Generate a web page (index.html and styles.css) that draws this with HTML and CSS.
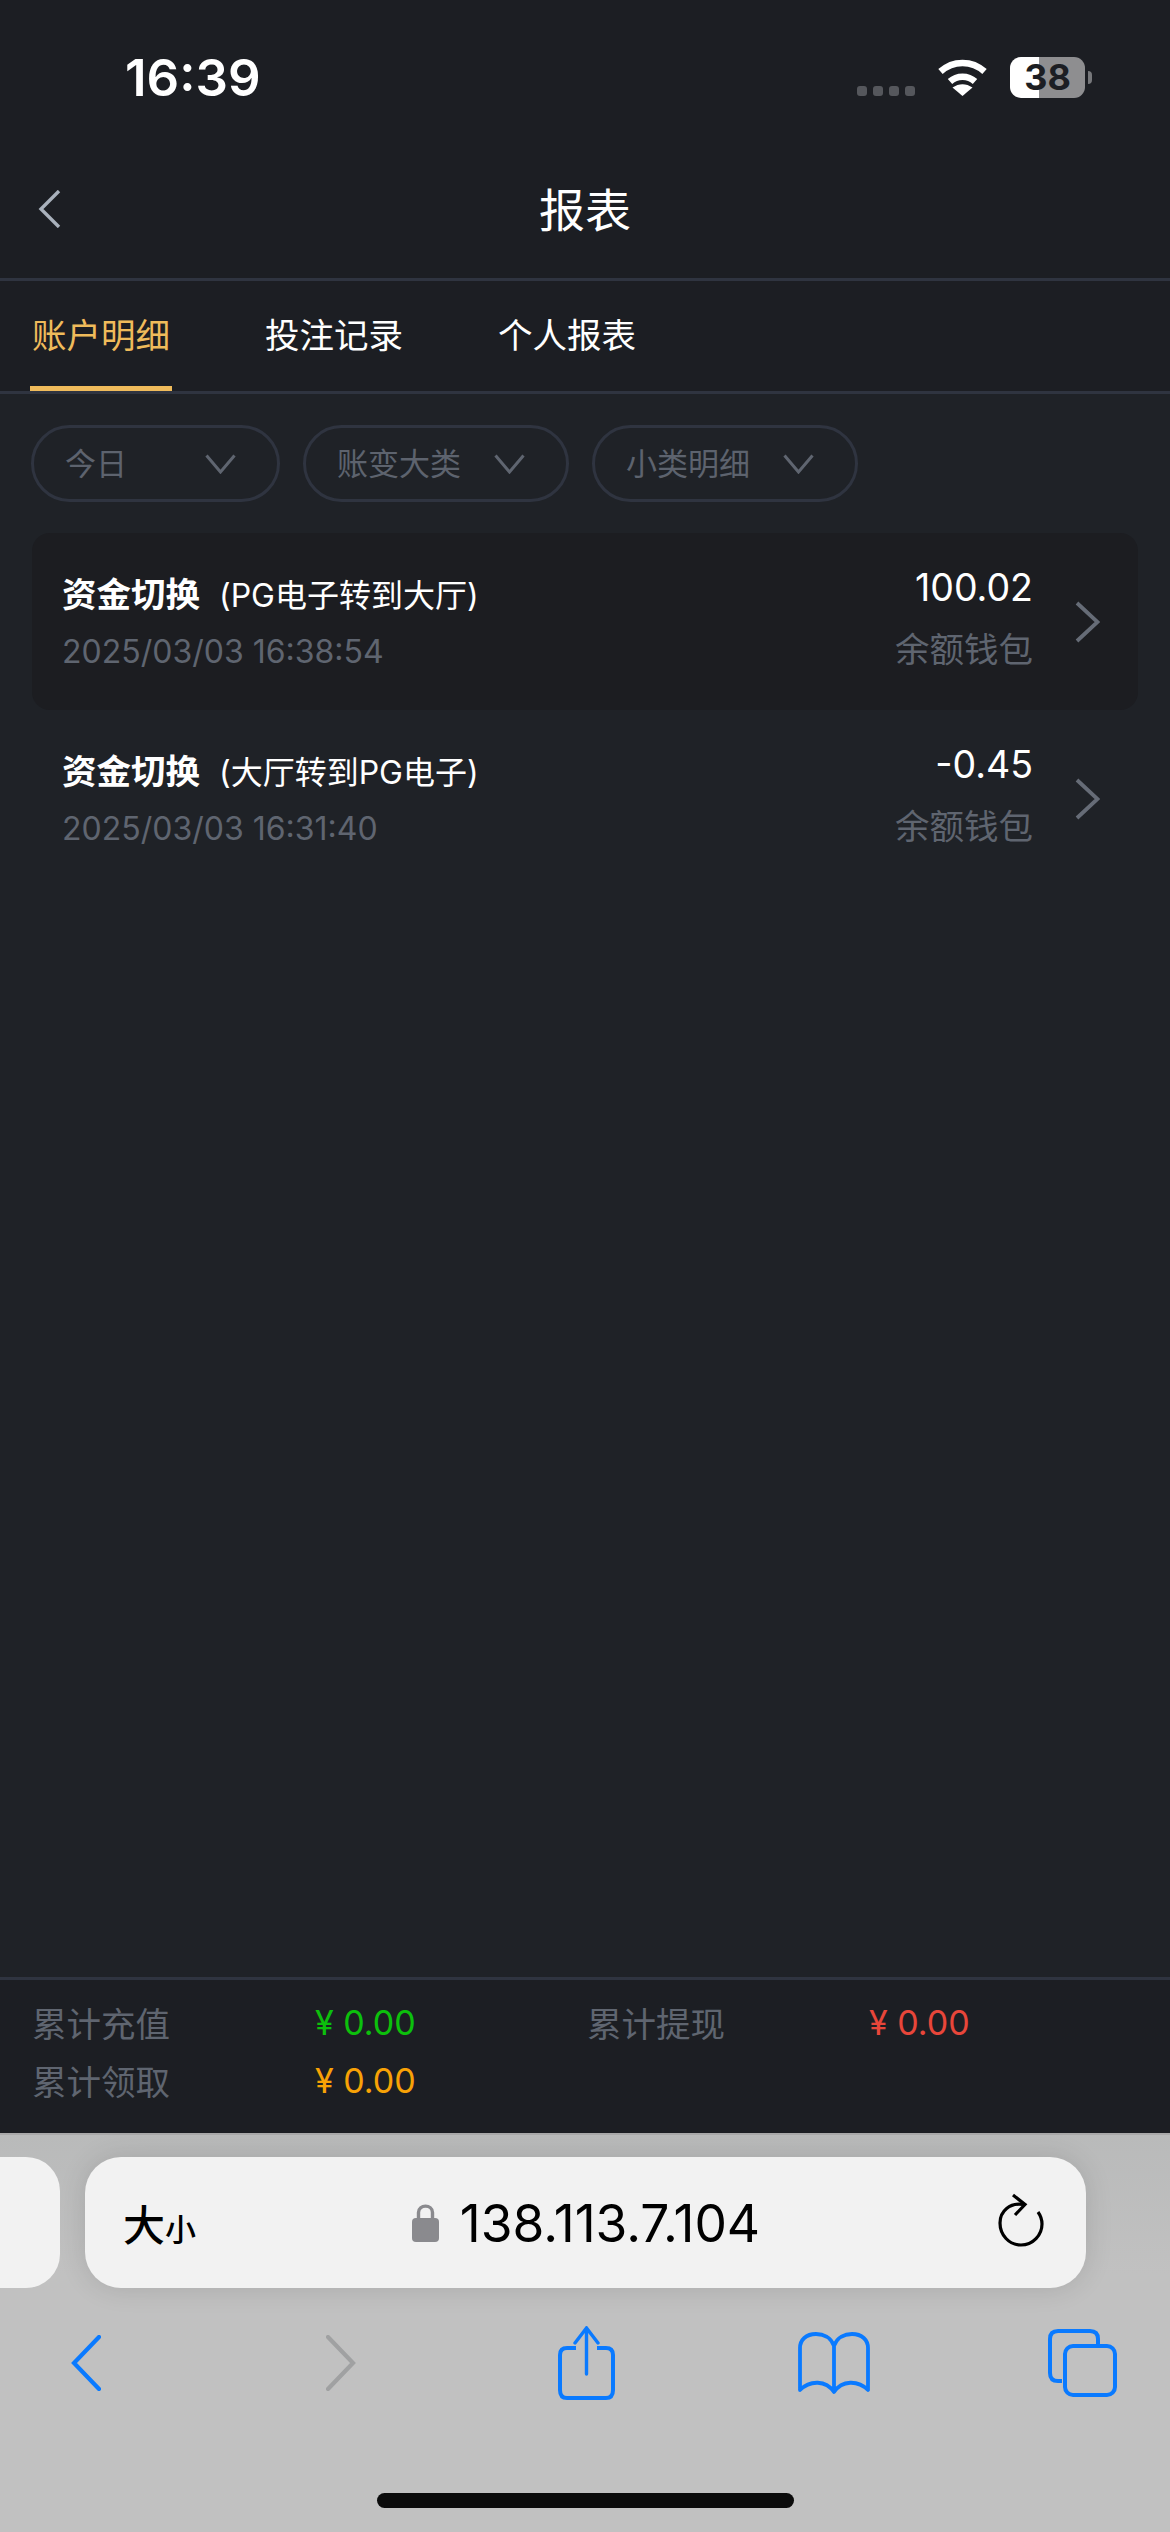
FILE: index.html
```html
<!DOCTYPE html>
<html lang="zh-CN">
<head>
    <meta charset="UTF-8">
    <meta name="viewport" content="width=device-width, initial-scale=1.0">
    <title>报表</title>
    <link rel="stylesheet" href="styles.css">
</head>
<body>
    <div class="page">
        <header class="top">
            <div class="status">
                <span class="time">16:39</span>
                <div class="status-icons">
                    <div class="signal"><i></i><i></i><i></i><i></i></div>
                    <svg class="wifi" width="51" height="37" viewBox="0 0 51 37">
                        <path d="M3.5 12.5C16 1 35 1 47.5 12.5" fill="none" stroke="#fff" stroke-width="6.5"/>
                        <path d="M13 22.5C20 16 31 16 38 22.5" fill="none" stroke="#fff" stroke-width="6.5"/>
                        <path d="M25.5 37L15.5 28.5C22 24 29 24 35.5 28.5Z" fill="#fff"/>
                    </svg>
                    <div class="battery">38</div>
                </div>
            </div>
            <div class="nav">
                <svg class="nav-back" width="24" height="38" viewBox="0 0 24 38">
                    <path d="M22 1L4 19L22 37" fill="none" stroke="#a9b1bc" stroke-width="3.4"/>
                </svg>
                <h1>报表</h1>
            </div>
        </header>

        <div class="tabs">
            <div class="tab active">账户明细</div>
            <div class="tab">投注记录</div>
            <div class="tab">个人报表</div>
        </div>

        <main class="content">
            <div class="filters">
                <div class="filter"><span>今日</span>
                    <svg width="31" height="20" viewBox="0 0 31 20"><path d="M1.5 1.5L15.5 18L29.5 1.5" fill="none" stroke="#5f6570" stroke-width="3"/></svg>
                </div>
                <div class="filter"><span>账变大类</span>
                    <svg width="31" height="20" viewBox="0 0 31 20"><path d="M1.5 1.5L15.5 18L29.5 1.5" fill="none" stroke="#5f6570" stroke-width="3"/></svg>
                </div>
                <div class="filter"><span>小类明细</span>
                    <svg width="31" height="20" viewBox="0 0 31 20"><path d="M1.5 1.5L15.5 18L29.5 1.5" fill="none" stroke="#5f6570" stroke-width="3"/></svg>
                </div>
            </div>

            <div class="list">
                <div class="row selected">
                    <div class="row-left">
                        <div class="row-title"><b>资金切换</b><span>(PG电子转到大厅)</span></div>
                        <div class="row-date">2025/03/03 16:38:54</div>
                    </div>
                    <div class="row-right">
                        <div class="row-amount">100.02</div>
                        <div class="row-wallet">余额钱包</div>
                    </div>
                    <svg class="row-arrow" width="25" height="42" viewBox="0 0 25 42"><path d="M2 2L22.500 21L2 40" fill="none" stroke="#666c77" stroke-width="3.800"/></svg>
                </div>
                <div class="row">
                    <div class="row-left">
                        <div class="row-title"><b>资金切换</b><span>(大厅转到PG电子)</span></div>
                        <div class="row-date">2025/03/03 16:31:40</div>
                    </div>
                    <div class="row-right">
                        <div class="row-amount">-0.45</div>
                        <div class="row-wallet">余额钱包</div>
                    </div>
                    <svg class="row-arrow" width="25" height="42" viewBox="0 0 25 42"><path d="M2 2L22.500 21L2 40" fill="none" stroke="#666c77" stroke-width="3.800"/></svg>
                </div>
            </div>
        </main>

        <div class="summary">
            <span class="sum-label">累计充值</span>
            <span class="sum-value green">¥ 0.00</span>
            <span class="sum-label">累计提现</span>
            <span class="sum-value red">¥ 0.00</span>
            <span class="sum-label">累计领取</span>
            <span class="sum-value orange">¥ 0.00</span>
        </div>

        <footer class="safari">
            <div class="address-row">
                <div class="prev-tab"></div>
                <div class="address">
                    <span class="text-size">大<small>小</small></span>
                    <div class="url">
                        <svg width="27" height="39" viewBox="0 0 27 39">
                            <path d="M6.5 17V9.5C6.5 1 20.5 1 20.5 9.5V17" fill="none" stroke="#8a8a8e" stroke-width="3.4"/>
                            <rect y="15" width="27" height="24" rx="4" fill="#8a8a8e"/>
                        </svg>
                        <span>138.113.7.104</span>
                    </div>
                    <svg class="reload" width="46" height="54" viewBox="0 0 46 54">
                        <path d="M25 11.500C12 9.500 2 18 2 30C2 42 11 52 23 52C35 52 44 42 44 31C44 26 42.500 22.500 40 19" fill="none" stroke="#000" stroke-width="3.200"/>
                        <path d="M15 2L27 11.500L17 22" fill="none" stroke="#000" stroke-width="3.200"/>
                    </svg>
                </div>
            </div>
            <div class="toolbar">
                <svg class="tool-back" width="30" height="56" viewBox="0 0 30 56"><path d="M28 2L3 28L28 54" fill="none" stroke="#0a7aff" stroke-width="4.200" stroke-linecap="round"/></svg>
                <svg class="tool-forward" width="30" height="56" viewBox="0 0 30 56"><path d="M2 2L27 28L2 54" fill="none" stroke="#a0a1a2" stroke-width="4.200" stroke-linecap="round"/></svg>
                <svg class="tool-share" width="57" height="74" viewBox="0 0 57 74">
                    <path d="M18 22H9C4.500 22 2 24.500 2 29V64C2 69.500 4.500 72 9 72H48C52.500 72 55 69.500 55 64V29C55 24.500 52.500 22 48 22H39" fill="none" stroke="#0a7aff" stroke-width="4"/>
                    <path d="M28.500 48V3M17 17L28.500 2L40 17" fill="none" stroke="#0a7aff" stroke-width="3.400" stroke-linecap="round"/>
                </svg>
                <svg class="tool-book" width="72" height="62" viewBox="0 0 72 62">
                    <path d="M36 60V14C33 5 25 2 18 2C8 2 2 8 2 16V58C12 48 28 48 36 60C44 48 60 48 70 58V16C70 8 64 2 54 2C47 2 39 5 36 14" fill="none" stroke="#0a7aff" stroke-width="3.800" stroke-linejoin="round"/>
                </svg>
                <svg class="tool-tabs" width="69" height="68" viewBox="0 0 69 68">
                    <path d="M14 52H10C4.500 52 2 49 2 44V10C2 5 4.500 2 10 2H42C47.500 2 50 5 50 10V16" fill="none" stroke="#0a7aff" stroke-width="4"/>
                    <rect x="17" y="17" width="50" height="49" rx="8" fill="none" stroke="#0a7aff" stroke-width="4"/>
                </svg>
            </div>
            <div class="home-indicator"></div>
        </footer>
    </div>
</body>
</html>
```

FILE: styles.css
```css
* {
    box-sizing: border-box;
}

body {
    margin: 0;
    font-family: 'Inter', 'Noto Sans CJK SC', sans-serif;
    background-color: #1f2227;
}

.page {
    width: 1170px;
    height: 2532px;
    display: flex;
    flex-direction: column;
    overflow: hidden;
}

.top {
    height: 281px;
    background-color: #1c1e23;
    border-bottom: 3px solid #2f3440;
}

.status {
    height: 150px;
    padding: 50px 85px 0 125px;
    display: flex;
    justify-content: space-between;
    align-items: flex-start;
}

.time {
    color: #fff;
    font-size: 51px;
    font-weight: 600;
    line-height: 56px;
}

.status-icons {
    display: flex;
    align-items: flex-start;
    margin-top: 7px;
}

.signal {
    display: flex;
    gap: 6px;
    margin-top: 29px;
    margin-right: 22px;
}

.signal i {
    width: 10px;
    height: 10px;
    border-radius: 3px;
    background-color: #55575c;
}

.wifi {
    margin-top: 2px;
    margin-right: 22px;
}

.battery {
    position: relative;
    width: 75px;
    height: 41px;
    border-radius: 11px;
    background: linear-gradient(to right, #fff 39%, #8e8e90 39%);
    color: #1c1e23;
    font-size: 36px;
    font-weight: 700;
    line-height: 41px;
    text-align: center;
}

.battery::after {
    content: "";
    position: absolute;
    right: -7px;
    top: 14px;
    width: 4px;
    height: 13px;
    border-radius: 0 4px 4px 0;
    background-color: #77787b;
}

.nav {
    position: relative;
    height: 128px;
    display: flex;
    justify-content: center;
    align-items: center;
}

.nav h1 {
    margin: -14px 0 0;
    color: #fff;
    font-size: 46px;
    font-weight: 400;
}

.nav-back {
    position: absolute;
    left: 37px;
    top: 40px;
}

.tabs {
    height: 113px;
    padding-left: 30px;
    display: flex;
    gap: 91px;
    background-color: #1c1e23;
    border-bottom: 3px solid #2f3440;
}

.tab {
    height: 110px;
    padding: 0 2px;
    color: #fff;
    font-size: 34.5px;
    line-height: 110px;
    border-bottom: 5px solid transparent;
}

.tab.active {
    color: #efbb5b;
    border-bottom-color: #efbb5b;
}

.content {
    flex: 1;
    background-color: #1f2227;
}

.filters {
    display: flex;
    gap: 23px;
    padding: 31px 0 0 31px;
}

.filter {
    min-width: 249px;
    height: 77px;
    padding: 0 41px 0 31px;
    display: flex;
    justify-content: space-between;
    align-items: center;
    gap: 33px;
    color: #5d636e;
    font-size: 31px;
    border: 3px solid #2f3440;
    border-radius: 39px;
}

.filter span {
    margin-top: -4px;
}

.list {
    margin-top: 31px;
    padding: 0 32px;
}

.row {
    height: 177px;
    padding: 0 38px 0 30px;
    display: flex;
    align-items: flex-start;
}

.row.selected {
    background-color: #1c1d21;
    border-radius: 18px;
}

.row-left {
    flex: 1;
    padding-top: 40px;
}

.row-title {
    color: #fff;
    line-height: 44px;
    white-space: nowrap;
}

.row-title b {
    font-size: 34.5px;
    font-weight: 700;
    margin-right: 19px;
}

.row-title span {
    font-size: 32px;
}

.row-date {
    margin-top: 7px;
    color: #5f6570;
    font-size: 32px;
    line-height: 44px;
}

.row-right {
    padding-top: 33px;
    text-align: right;
}

.row-amount {
    color: #fff;
    font-size: 37.5px;
    line-height: 44px;
}

.row-wallet {
    margin-top: 18px;
    color: #5f6570;
    font-size: 34.5px;
    line-height: 44px;
}

.row-arrow {
    margin-left: 42px;
    align-self: center;
}

.summary {
    height: 156px;
    padding: 13px 0 0 32px;
    display: grid;
    grid-template-columns: 283px 272px 282px 1fr;
    grid-auto-rows: 58px;
    align-items: center;
    background-color: #1c1e23;
    border-top: 3px solid #2f3440;
}

.sum-label {
    color: #5f6570;
    font-size: 34.5px;
}

.sum-value {
    font-size: 34px;
}

.green {
    color: #0cc00c;
}

.red {
    color: #e8463a;
}

.orange {
    color: #f8a206;
}

.safari {
    height: 399px;
    display: flex;
    flex-direction: column;
    background: linear-gradient(#b9baba, #c1c1c1 35%);
    border-top: 2px solid #a9a9a9;
}

.address-row {
    margin-top: 22px;
    display: flex;
    gap: 25px;
}

.prev-tab {
    width: 60px;
    height: 131px;
    background-color: #f2f2f2;
    border-radius: 0 34px 34px 0;
}

.address {
    width: 1001px;
    height: 131px;
    padding: 0 42px 0 38px;
    display: flex;
    justify-content: space-between;
    align-items: center;
    background-color: #f2f2f2;
    border-radius: 36px;
    box-shadow: 0 0 28px rgba(0, 0, 0, 0.12);
}

.text-size {
    color: #000;
    font-size: 42px;
    font-weight: 500;
    white-space: nowrap;
}

.text-size small {
    font-size: 31px;
}

.url {
    display: flex;
    align-items: center;
    gap: 21px;
    color: #000;
    font-size: 51.5px;
    margin-right: 22px;
}

.reload {
    margin-top: -6px;
}

.toolbar {
    height: 74px;
    margin-top: 38px;
    padding-left: 71px;
    display: flex;
    align-items: center;
}

.tool-forward {
    margin-left: 225px;
}

.tool-share {
    margin-left: 202px;
}

.tool-book {
    margin-left: 183px;
}

.tool-tabs {
    margin-left: 178px;
}

.home-indicator {
    width: 417px;
    height: 15px;
    margin: 93px auto 0;
    background-color: #0b0b0b;
    border-radius: 8px;
}
```
